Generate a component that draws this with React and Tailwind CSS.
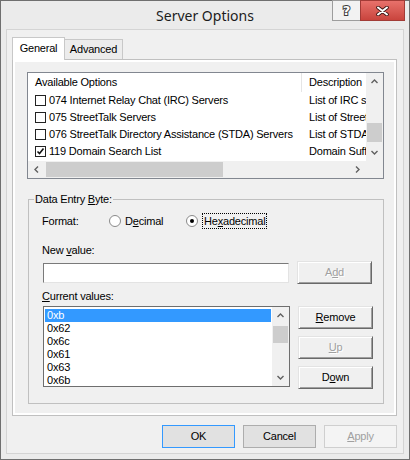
import React from 'react';

const options = [
  { label: '074 Internet Relay Chat (IRC) Servers', desc: 'List of IRC servers', checked: false },
  { label: '075 StreetTalk Servers', desc: 'List of StreetTalk servers', checked: false },
  { label: '076 StreetTalk Directory Assistance (STDA) Servers', desc: 'List of STDA servers', checked: false },
  { label: '119 Domain Search List', desc: 'Domain Suffix Search Order', checked: true },
];

const currentValues = ['0xb', '0x62', '0x6c', '0x61', '0x63', '0x6b'];

const arrowPoints = {
  up: '0.5,5 3.5,2 6.5,5',
  down: '0.5,2 3.5,5 6.5,2',
  left: '5,0.5 2,3.5 5,6.5',
  right: '2,0.5 5,3.5 2,6.5',
};

function Arrow({ dir }) {
  return (
    <svg width="7" height="7" viewBox="0 0 7 7">
      <polyline points={arrowPoints[dir]} fill="none" stroke="#606060" strokeWidth="1.4" />
    </svg>
  );
}

function VScroll({ thumbTop, thumbHeight }) {
  return (
    <div className="flex h-full w-[17px] shrink-0 flex-col bg-[#f0f0f0]">
      <div className="flex h-[17px] items-center justify-center">
        <Arrow dir="up" />
      </div>
      <div className="flex-1">
        <div className="mx-auto w-[15px] bg-[#cdcdcd]" style={{ marginTop: thumbTop, height: thumbHeight }} />
      </div>
      <div className="flex h-[17px] items-center justify-center">
        <Arrow dir="down" />
      </div>
    </div>
  );
}

function CheckBox({ checked }) {
  return (
    <span className="flex h-[11px] w-[11px] shrink-0 items-center justify-center border border-[#222] bg-white">
      {checked ? (
        <svg width="9" height="9" viewBox="0 0 9 9">
          <polyline points="1.5,4.5 3.5,6.5 7.5,1.5" fill="none" stroke="#111" strokeWidth="1.6" />
        </svg>
      ) : null}
    </span>
  );
}

function Radio({ checked }) {
  return (
    <span className="flex h-[12px] w-[12px] shrink-0 items-center justify-center rounded-full border border-[#8a8a8a] bg-white">
      {checked ? <span className="h-[4px] w-[4px] rounded-full bg-black" /> : null}
    </span>
  );
}

const classicBtn =
  'flex h-[23px] w-[75px] items-center justify-center border border-t-[#e3e3e3] border-l-[#e3e3e3] border-b-[#696969] border-r-[#696969] bg-[#f0f0f0] shadow-[inset_1px_1px_0_#ffffff,inset_-1px_-1px_0_#a0a0a0]';
const disabledText = 'text-[#a0a0a0] [text-shadow:1px_1px_0_#ffffff]';

function OptionsList() {
  return (
    <div className="flex h-[107px] flex-col border border-[#828790] bg-white">
      <div className="flex h-[88px]">
        <div className="flex w-[338px] flex-col overflow-hidden">
          <div className="flex h-[19px] shrink-0 items-center">
            <div className="flex h-full w-[274px] shrink-0 items-center border-r border-[#e5e5e5] pl-[7px]">Available Options</div>
            <div className="pl-[7px] whitespace-nowrap">Description</div>
          </div>
          {options.map((o) => (
            <div key={o.label} className="flex h-[17px] shrink-0 items-center whitespace-nowrap">
              <div className="flex w-[274px] shrink-0 items-center overflow-hidden pl-[7px]">
                <CheckBox checked={o.checked} />
                <span className="ml-[3px]">{o.label}</span>
              </div>
              <div className="w-[64px] shrink-0 overflow-hidden pl-[7px]">{o.desc}</div>
            </div>
          ))}
        </div>
        <VScroll thumbTop={33} thumbHeight={19} />
      </div>
      <div className="flex h-[17px] bg-[#f0f0f0]">
        <div className="flex w-[17px] items-center justify-center">
          <Arrow dir="left" />
        </div>
        <div className="flex-1">
          <div className="ml-[1px] mt-[1px] h-[15px] w-[177px] bg-[#cdcdcd]" />
        </div>
        <div className="flex w-[17px] items-center justify-center">
          <Arrow dir="right" />
        </div>
        <div className="w-[17px]" />
      </div>
    </div>
  );
}

function DataEntryGroup() {
  return (
    <fieldset className="mx-[13px] mt-[14px] border border-[#c0c0c0] pl-[13px] pr-[10px] pb-[14px]">
      <legend className="ml-[-8px] px-[1px] leading-[13px]">
        Data Entry <u>B</u>yte:
      </legend>
      <div className="mt-[7px] flex h-[16px] items-center">
        <span className="w-[67px]">Format:</span>
        <label className="flex w-[77px] items-center">
          <Radio checked={false} />
          <span className="ml-[4px]">
            D<u>e</u>cimal
          </span>
        </label>
        <label className="flex items-center">
          <Radio checked />
          <span className="ml-[4px] border border-dotted border-black px-[1px] leading-[14px]">
            He<u>x</u>adecimal
          </span>
        </label>
      </div>

      <div className="mt-[15px] leading-[13px]">
        New <u>v</u>alue:
      </div>
      <div className="mt-[4px] flex h-[23px] items-center gap-[8px]">
        <div className="ml-[1px] h-[20px] w-[246px] border border-t-[#7a7a7a] border-l-[#7a7a7a] border-b-[#e3e3e3] border-r-[#e3e3e3] bg-white" />
        <button className={classicBtn}>
          <span className={disabledText}>
            A<u>d</u>d
          </span>
        </button>
      </div>

      <div className="mt-[6px] leading-[13px]">
        <u>C</u>urrent values:
      </div>
      <div className="mt-[3px] flex gap-[8px]">
        <div className="ml-[1px] flex h-[81px] w-[247px] border border-[#6e6e6e] bg-white">
          <div className="flex flex-1 flex-col overflow-hidden px-[1px] pt-[2px]">
            {currentValues.map((v, i) => (
              <div
                key={v}
                className={`h-[13px] shrink-0 pl-[2px] leading-[13px] ${i === 0 ? 'bg-[#3399ff] text-white' : ''}`}
              >
                {v}
              </div>
            ))}
          </div>
          <VScroll thumbTop={2} thumbHeight={17} />
        </div>
        <div className="flex flex-col gap-[7px]">
          <button className={classicBtn}>
            <span>
              <u>R</u>emove
            </span>
          </button>
          <button className={classicBtn}>
            <span className={disabledText}>
              <u>U</u>p
            </span>
          </button>
          <button className={classicBtn}>
            <span>
              D<u>o</u>wn
            </span>
          </button>
        </div>
      </div>
    </fieldset>
  );
}

export default function App() {
  return (
    <div className="flex h-[460px] w-[410px] flex-col border border-[#6f6f6f] bg-[#ebebeb] px-[5px] pb-[5px] font-['Liberation_Sans',Arial,sans-serif] text-[11px] tracking-[-0.2px] text-black select-none">
      <div className="relative flex h-[28px] shrink-0 items-center justify-center">
        <span className="font-['Noto_Sans','Open_Sans',sans-serif] text-[14px] tracking-normal text-[#1b1b1b]">Server Options</span>
        <div className="absolute right-[-1px] top-[-1px] flex">
          <div className="flex h-[21px] w-[28px] items-center justify-center border border-r-0 border-[#9d9d9d] bg-[#f2f2f2]">
            <span className="font-['DejaVu_Sans',sans-serif] text-[13px] font-bold text-white [-webkit-text-stroke:2px_#3c3c3c] [paint-order:stroke_fill]">
              ?
            </span>
          </div>
          <div className="flex h-[21px] w-[45px] items-center justify-center border border-[#a23b36] bg-gradient-to-b from-[#e8716b] to-[#c9443d]">
            <svg width="13" height="10" viewBox="0 0 13 10">
              <path d="M2 1.5 L11 8.5 M11 1.5 L2 8.5" stroke="#3a1412" strokeWidth="3.6" strokeLinecap="round" />
              <path d="M2 1.5 L11 8.5 M11 1.5 L2 8.5" stroke="#ffffff" strokeWidth="2" strokeLinecap="round" />
            </svg>
          </div>
        </div>
      </div>

      <div className="flex flex-1 flex-col border border-[#d4d4d4] bg-[#f0f0f0] pl-[5px] pr-[6px] pt-[7px] pb-[5px]">
        <div className="flex h-[22px] shrink-0 items-end">
          <div className="relative z-10 mb-[-1px] flex h-[23px] w-[53px] items-center justify-center border border-b-0 border-[#c8c8c8] bg-white pb-[1px]">
            General
          </div>
          <div className="flex h-[20px] w-[58px] items-center justify-center border border-b-0 border-l-0 border-[#c8c8c8] bg-[#ececec]">
            Advanced
          </div>
        </div>

        <div className="flex flex-1 flex-col border border-[#c0c0c0] bg-white p-[2px]">
          <div className="flex flex-1 flex-col bg-[#f0f0f0]">
            <div className="ml-[12px] mr-[10px] mt-[10px]">
              <OptionsList />
            </div>
            <DataEntryGroup />
          </div>
        </div>

        <div className="mt-[9px] flex justify-end gap-[8px]">
          <button className="h-[23px] w-[73px] border border-[#3399ff] bg-[#e1e1e1]">OK</button>
          <button className="h-[23px] w-[73px] border border-[#adadad] bg-[#e1e1e1]">Cancel</button>
          <button className="h-[23px] w-[73px] border border-[#cfcfcf] bg-[#f4f4f4] text-[#a0a0a0]">
            <u>A</u>pply
          </button>
        </div>
      </div>
    </div>
  );
}
